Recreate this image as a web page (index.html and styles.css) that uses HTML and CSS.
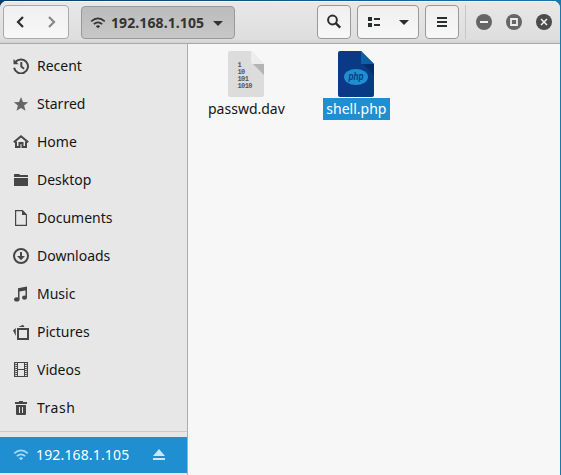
FILE: index.html
```html
<!DOCTYPE html>
<html lang="en">
<head>
<meta charset="utf-8">
<title>192.168.1.105</title>
<link rel="stylesheet" href="styles.css">
</head>
<body>
<svg width="0" height="0" class="defs"><defs>
<symbol id="wifi" viewBox="0 0 16 16"><path d="M1.2 6.3Q8 .3 14.8 6.3M3.8 9.2Q8 5.5 12.2 9.2" fill="none" stroke="currentColor" stroke-width="1.7"/><path d="M5.8 11.2Q8 9.5 10.2 11.2L8 13.3z" fill="currentColor"/></symbol>
</defs></svg>
<div class="window">
  <header class="bar">
    <div class="btn nav">
      <button class="half"><svg width="16" height="16"><path d="M11 3 6 8l5 5" fill="none" stroke="#2b2e2f" stroke-width="2.2"/></svg></button>
      <button class="half"><svg width="16" height="16"><path d="M5 3l5 5-5 5" fill="none" stroke="#858888" stroke-width="2.2"/></svg></button>
    </div>
    <button class="btn path"><svg width="16" height="16"><use href="#wifi"/></svg><span class="address">192.168.1.105</span><svg width="12" height="8"><path d="M1 2h10L6 7z" fill="currentColor"/></svg></button>
    <div class="tools">
      <button class="btn square"><svg width="16" height="16" fill="none" stroke="#2b2e2f"><circle cx="6.5" cy="6" r="4.4" stroke-width="2"/><path d="M9.7 9.2 14.2 13.7" stroke-width="2.4"/></svg></button>
      <button class="btn view"><svg width="14" height="12" fill="#2b2e2f"><path d="M1 1h4v4H1zM1 7h4v4H1zM7 2h6v2H7zM7 8h6v2H7z"/></svg><svg width="12" height="8"><path d="M1 2h10L6 7z" fill="#2b2e2f"/></svg></button>
      <button class="btn square"><svg width="10" height="10" fill="#2b2e2f"><path d="M0 0h10v2H0zM0 4h10v2H0zM0 8h10v2H0z"/></svg></button>
    </div>
    <div class="controls">
      <svg width="16" height="16"><circle cx="8" cy="8" r="8" fill="#666"/><path d="M4 7h8v2H4z" fill="#f2f2f2"/></svg>
      <svg width="16" height="16"><circle cx="8" cy="8" r="8" fill="#666"/><path d="M5 5h6v6H5z" fill="none" stroke="#ececec" stroke-width="1.8"/></svg>
      <svg width="16" height="16"><circle cx="8" cy="8" r="8" fill="#4b4b4b"/><path d="M5 5l6 6M11 5l-6 6" stroke="#f2f2f2" stroke-width="1.5"/></svg>
    </div>
  </header>
  <div class="body">
    <nav class="sidebar">
      <a class="row"><svg width="16" height="16" fill="none" stroke="currentColor"><path d="M2.5 4A7 7 0 1 1 1.1 9.8" stroke-width="2"/><path d="M8.3 4v4.500l2.800 2.300" stroke-width="2"/><path d="M.5 1v5.200h5.200z" fill="currentColor" stroke="none"/></svg>Recent</a>
      <a class="row"><svg width="16" height="16"><path d="M8 1l2 5 5.200.2-4.100 3.400 1.400 5.200L8 12l-4.500 2.800 1.400-5.200L.8 6.200 6 6z" fill="#666"/></svg>Starred</a>
      <a class="row"><svg width="16" height="16"><path d="M.8 8.300 8 2.200l7.200 6.100" fill="none" stroke="currentColor" stroke-width="2"/><path d="M3 7.500v5.500h3.500V9h3v4H13V7.500" fill="none" stroke="currentColor" stroke-width="2"/></svg>Home</a>
      <a class="row"><svg width="16" height="16" fill="currentColor"><path d="M1 2.400Q1 2 1.500 2h4.700l1 1H14.500q.5 0 .5.500V5H1zM1 6h14v7.500q0 .5-.5.500h-13Q1 14 1 13.500z"/></svg>Desktop</a>
      <a class="row"><svg width="16" height="16"><path d="M2.600.7H9.500l3.900 4v10.600H2.600z" fill="none" stroke="currentColor" stroke-width="1.200"/><path d="M9 .5V5h4.800z" fill="currentColor"/></svg>Documents</a>
      <a class="row"><svg width="16" height="16"><circle cx="8" cy="8" r="7" fill="none" stroke="currentColor" stroke-width="2"/><path d="M7 4h2v4h3l-4 4.300L4 8h3z" fill="currentColor"/></svg>Downloads</a>
      <a class="row"><svg width="16" height="16" fill="currentColor"><path d="M5 2.300 14 .5v11H12.500V4.400L6.500 5.600V13H5z"/><ellipse cx="3.800" cy="13.400" rx="2.700" ry="2.100"/><ellipse cx="11.500" cy="11.700" rx="2.500" ry="2.100"/></svg>Music</a>
      <a class="row"><svg width="16" height="16"><path d="M5 5h10v10H5z" fill="none" stroke="currentColor" stroke-width="2"/><path d="M5.500 3 10 .8l1.600 2.200zM2.800 4v8L0 6.500z" fill="currentColor"/></svg>Pictures</a>
      <a class="row"><svg width="16" height="16"><path d="M1.600 0v15M14.400 0v15" stroke="currentColor" stroke-width="1.200"/><path d="M4.500 0v15M11.500 0v15M1 .5h14M4.500 7.500h7M1 14.500h14" fill="none" stroke="currentColor"/><path d="M3.200 0v15M12.800 0v15" stroke="currentColor" stroke-width="1.800" stroke-dasharray="1 1"/></svg>Videos</a>
      <a class="row"><svg width="16" height="16"><path d="M2 2h4V1h4v1h4v2H2zM3 5h10v9q0 1-1 1H4q-1 0-1-1z" fill="currentColor"/><path d="M6.500 7v6M9.500 7v6" stroke="#e7e7e7"/></svg><span class="trash">Trash</span></a>
      <hr>
      <a class="row selected"><svg width="16" height="16"><use href="#wifi"/></svg>192.168.1.105<svg class="eject" width="14" height="14" fill="#cce6f5"><path d="M7 1l6 7H1zM1 10h12v2H1z"/></svg></a>
    </nav>
    <main class="files">
      <figure class="file">
        <svg width="36" height="46"><path d="M2 0h21l13 13v31q0 2-2 2H2q-2 0-2-2V2Q0 0 2 0z" fill="#dcdcdc"/><path d="M23 0l13 13H25q-2 0-2-2z" fill="#ededed"/><path d="M25 13h11v11z" fill="#b4b4b4"/><g class="bits"><text x="9.500" y="16">1</text><text x="9.500" y="23">10</text><text x="9.500" y="30">101</text><text x="9.500" y="37">1010</text></g></svg>
        <figcaption>passwd.dav</figcaption>
      </figure>
      <figure class="file chosen">
        <svg width="36" height="46"><path d="M2 0h21l13 13v31q0 2-2 2H2q-2 0-2-2V2Q0 0 2 0z" fill="#083a85"/><path d="M23 0l13 13H23z" fill="#0e5fa5"/><path d="M25 13h11v11z" fill="#062d68"/><ellipse cx="18" cy="26" rx="12" ry="8" fill="#1f8fd1"/><text class="php" x="18" y="29" text-anchor="middle" textLength="15" lengthAdjust="spacingAndGlyphs">php</text></svg>
        <figcaption>shell.php</figcaption>
      </figure>
    </main>
  </div>
</div>
</body>
</html>
```
FILE: styles.css
```css
* { box-sizing: border-box; }
body {
  margin: 0;
  height: 475px;
  padding: 1px 1px 0 0;
  overflow: hidden;
  background: linear-gradient(90deg, #093d6b, #135c90 60%, #1678ac);
  font: 14px/20px "Noto Sans", "Open Sans", sans-serif;
  color: #151515;
}
.defs { position: absolute; }
svg { display: block; flex: none; }
button { font: inherit; color: inherit; padding: 0; }
.window {
  height: 474px;
  display: flex;
  flex-direction: column;
  border-radius: 7px 7px 0 0;
  overflow: hidden;
  background: #f7f7f7;
}
.bar {
  flex: none;
  height: 43px;
  display: flex;
  align-items: flex-start;
  padding: 4px 8px 0 3px;
  border-bottom: 1px solid #aaa;
  background: linear-gradient(#e8e8e8, #dedede 38px, #d2d2d2);
  box-shadow: inset 0 1px #f8f8f8;
}
.btn {
  height: 34px;
  display: flex;
  align-items: center;
  justify-content: center;
  border: 1px solid #999;
  border-radius: 4px;
  background: linear-gradient(#f0f0f0, #f7f7f7);
}
.nav { width: 66px; border-color: #aaa; }
.half {
  width: 32px;
  height: 32px;
  display: flex;
  align-items: center;
  justify-content: center;
  border: 0;
  background: none;
}
.path {
  width: 154px;
  margin-left: 12px;
  height: 33px;
  margin-top: 1px;
  gap: 5px;
  justify-content: flex-start;
  padding-left: 8px;
  background: linear-gradient(#bcbcbc, #c7c7c7);
  color: #333;
  font-weight: 700;
}
.address { width: 94px; margin-right: 2px; letter-spacing: .1px; white-space: nowrap; text-align: left; }
.tools { display: flex; gap: 6px; margin-left: 82px; }
.square { width: 34px; }
.view { width: 62px; gap: 17px; }
.controls {
  display: flex;
  align-items: center;
  gap: 14px;
  height: 34px;
  margin-left: 6px;
  padding-left: 10px;
  border-left: 1px solid #c6c6c6;
}
.body { flex: 1; display: flex; }
.sidebar {
  width: 188px;
  padding-top: 3px;
  border-right: 1px solid #adadad;
  background: #e7e7e7;
}
.row {
  height: 38px;
  display: flex;
  align-items: center;
  gap: 8px;
  padding-left: 13px;
}
.row svg { color: #464646; }
.trash { letter-spacing: .5px; }
hr { height: 1px; margin: 4px 0 5px; border: 0; background: #cacaca; }
.row.selected {
  height: 36px;
  gap: 7px;
  padding-right: 21px;
  background: #1f8fd1;
  color: #fff;
  letter-spacing: .15px;
}
.row.selected svg { color: #a9d9f5; }
.row .eject { margin-left: auto; }
.files { display: flex; gap: 34px; padding: 7px 0 0 16px; }
.file { margin: 0; display: flex; flex-direction: column; align-items: center; }
figcaption { height: 22px; margin-top: 1px; padding: 0 4px; line-height: 22px; white-space: nowrap; }
.chosen figcaption { padding: 0 3.500px; background: #1f8fd1; color: #fff; }
.bits { font: 700 7px "Liberation Mono", monospace; letter-spacing: -.6px; fill: #555; }
.php { font: italic 700 11px "Liberation Sans", sans-serif; fill: #083a85; }
```
